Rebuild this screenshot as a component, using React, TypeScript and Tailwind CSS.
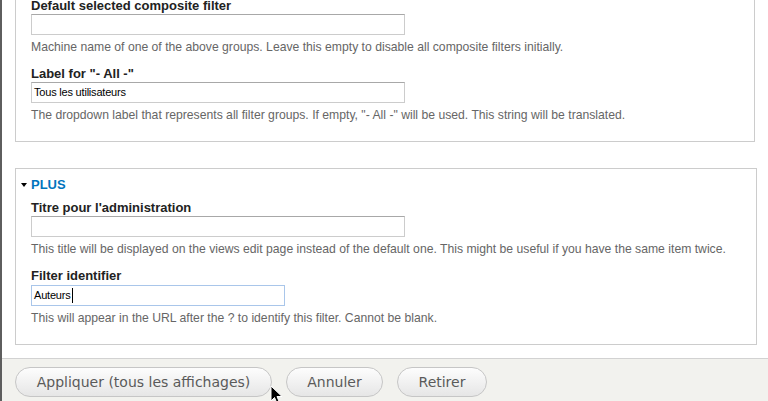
import React from 'react';

const Label: React.FC<{ text: string; className?: string }> = ({ text, className = '' }) => (
    <div className={`h-4 text-[13px] leading-4 font-bold text-[#222] ${className}`}>{text}</div>
);

const Desc: React.FC<{ text: string }> = ({ text }) => (
    <div className="mt-[4px] h-4 text-[12.2px] leading-4 text-[#666] whitespace-nowrap">{text}</div>
);

const TextBox: React.FC<{ value?: string; width?: string; focused?: boolean; className?: string }> = ({
    value = '',
    width = 'w-[374px]',
    focused = false,
    className = ''
}) => (
    <div
        className={`
            ${width} h-[21px] border px-[2px] flex items-center bg-white
            text-[11px] tracking-[-0.2px] text-black
            ${focused ? 'border-[#a9c6ea]' : 'border-[#ccc] border-t-[#a8a8a8]'}
            ${className}
        `}
    >
        <span>{value}</span>
        {focused && <span className="ml-[1px] w-px h-[15px] bg-black" />}
    </div>
);

const Button: React.FC<{ label: string; width: string }> = ({ label, width }) => (
    <button
        className={`
            ${width} h-[30px] rounded-full border border-[#c6c6c6]
            bg-gradient-to-b from-[#fdfdfd] to-[#e6e6e6]
            text-[14px] text-[#5a5a5a] font-['DejaVu_Sans',Verdana,sans-serif]
        `}
    >
        {label}
    </button>
);

export default function App() {
    return (
        <div className="relative w-[768px] h-[401px] overflow-hidden flex flex-col bg-white border-l-2 border-[#5e5e5e] font-['Liberation_Sans',Arial,sans-serif]">
            {/* Form body */}
            <div className="pl-[13px]">
                {/* Fieldset 1 (top cut off) */}
                <div className="-mt-[2px] w-[740px] border-x border-b border-[#ccc] pl-[15px] pb-[18px]">
                    <Label text="Default selected composite filter" />
                    <TextBox />
                    <Desc text="Machine name of one of the above groups. Leave this empty to disable all composite filters initially." />

                    <Label text={'Label for "- All -"'} className="mt-[11px]" />
                    <TextBox value="Tous les utilisateurs" />
                    <Desc text={'The dropdown label that represents all filter groups. If empty, "- All -" will be used. This string will be translated.'} />
                </div>

                {/* Fieldset 2 - PLUS */}
                <div className="mt-[26px] w-[742px] border border-[#ccc] pl-[5px] pt-[8px] pb-[18px]">
                    <div className="h-4 flex items-center gap-[4px]">
                        <span className="w-0 h-0 border-l-[3px] border-r-[3px] border-t-[4px] border-l-transparent border-r-transparent border-t-black" />
                        <span className="text-[13px] leading-4 font-bold text-[#0074bd]">PLUS</span>
                    </div>

                    <div className="pl-[10px]">
                        <Label text="Titre pour l'administration" className="mt-[7px]" />
                        <TextBox />
                        <Desc text="This title will be displayed on the views edit page instead of the default one. This might be useful if you have the same item twice." />

                        <Label text="Filter identifier" className="mt-[11px]" />
                        <TextBox value="Auteurs" width="w-[254px]" focused className="mt-[1px]" />
                        <Desc text="This will appear in the URL after the ? to identify this filter. Cannot be blank." />
                    </div>
                </div>
            </div>

            {/* Footer buttons */}
            <div className="mt-[13px] flex-1 border-t border-[#d2d2d2] bg-[#f2f2ee] pl-[13px] pt-[8px] flex gap-[14px]">
                <Button label="Appliquer (tous les affichages)" width="w-[257px]" />
                <Button label="Annuler" width="w-[97px]" />
                <Button label="Retirer" width="w-[90px]" />
            </div>

            {/* Mouse pointer */}
            <svg className="absolute left-[268px] top-[385px]" width="14" height="20" viewBox="0 0 14 20">
                <path d="M1 1 L1 16 L4.5 12.5 L7 18.5 L9.5 17.5 L7 11.5 L12 11.5 Z" fill="#000" stroke="#fff" strokeWidth="1" />
            </svg>
        </div>
    );
}
